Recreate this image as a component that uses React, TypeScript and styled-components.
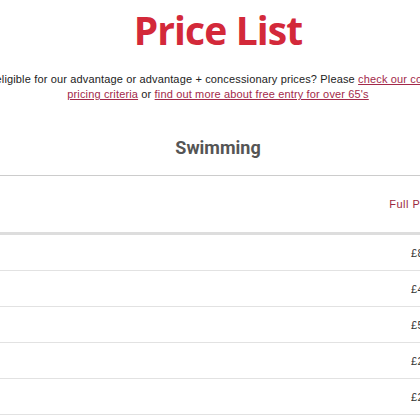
import React from 'react';
import styled, { createGlobalStyle } from 'styled-components';

const GlobalStyle = createGlobalStyle`
  html, body {
    margin: 0;
    padding: 0;
    background: #fff;
    overflow: hidden;
  }
  body {
    font-family: 'Liberation Sans', Arial, sans-serif;
    color: #333;
  }
`;

const Page = styled.div`
  width: 1100px;
  margin-left: -332px;
  display: flex;
  flex-direction: column;
  align-items: center;
`;

const Title = styled.h1`
  margin: 5px 0 0;
  font-family: 'Open Sans', sans-serif;
  font-weight: 700;
  font-size: 39px;
  line-height: 50px;
  color: #d3293a;
  letter-spacing: -0.9px;
`;

const Intro = styled.p`
  margin: 17px 0 0;
  max-width: 540px;
  text-align: center;
  font-size: 11px;
  line-height: 15px;
  letter-spacing: 0.15px;
  color: #222;
`;

const Link = styled.a`
  color: #a3294a;
  text-decoration: underline;
`;

const SectionTitle = styled.h2`
  margin: 35px 0 0;
  font-family: Roboto, sans-serif;
  font-weight: 700;
  font-size: 18px;
  line-height: 22px;
  color: #555;
`;

const Table = styled.table`
  margin-top: 16px;
  width: 100%;
  table-layout: fixed;
  border-collapse: collapse;
  border-top: 1px solid #ccc;
`;

const Col = styled.col<{ $w: number }>`
  width: ${p => p.$w}px;
`;

const HeadCell = styled.th<{ $align?: string }>`
  height: 56px;
  padding: 0 16px;
  text-align: ${p => p.$align || 'left'};
  font-weight: 400;
  font-size: 11px;
  letter-spacing: 0.5px;
  color: #9c2840;
  border-bottom: 3px solid #ddd;
`;

const Cell = styled.td<{ $align?: string }>`
  height: 35px;
  padding: 0 16px;
  text-align: ${p => p.$align || 'left'};
  font-size: 11px;
  letter-spacing: 0.3px;
  color: #333;
  border-bottom: 1px solid #e2e2e2;
`;

const rows = [
  { name: 'Adult swim', full: '£8.00', adv: '£6.40' },
  { name: 'Junior swim', full: '£4.00', adv: '£3.20' },
  { name: 'Family swim', full: '£5.50', adv: '£4.40' },
  { name: 'Parent & toddler', full: '£2.50', adv: '£2.00' },
  { name: 'Aqua fit', full: '£2.75', adv: '£2.20' },
  { name: 'Lane swim', full: '£3.00', adv: '£2.40' },
];

const App: React.FC = () => (
  <>
    <GlobalStyle />
    <Page>
      <Title>Price List</Title>
      <Intro>
        Are you eligible for our advantage or advantage + concessionary prices? Please{' '}
        <Link href="#">check our concessionary pricing criteria</Link> or{' '}
        <Link href="#">find out more about free entry for over 65's</Link>
      </Intro>
      <SectionTitle>Swimming</SectionTitle>
      <Table>
        <colgroup>
          <Col $w={668} />
          <Col $w={120} />
          <Col $w={312} />
        </colgroup>
        <thead>
          <tr>
            <HeadCell></HeadCell>
            <HeadCell $align="right">Full Price</HeadCell>
            <HeadCell $align="right">Advantage</HeadCell>
          </tr>
        </thead>
        <tbody>
          {rows.map(r => (
            <tr key={r.name}>
              <Cell></Cell>
              <Cell $align="right">{r.full}</Cell>
              <Cell $align="right">{r.adv}</Cell>
            </tr>
          ))}
        </tbody>
      </Table>
    </Page>
  </>
);

export default App;
